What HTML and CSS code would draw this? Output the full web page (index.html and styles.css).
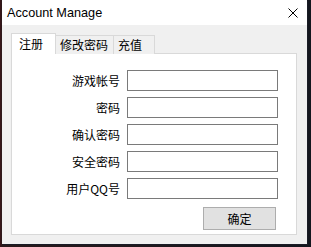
FILE: index.html
```html
<!DOCTYPE html>
<html lang="zh">
<head>
  <meta charset="UTF-8" />
  <title>Account Manage</title>
  <link rel="stylesheet" href="styles.css">
</head>
<body>
  <div class="window">
    <div class="titlebar">
      <span class="title">Account Manage</span>
      <svg class="close" width="10" height="10" viewBox="0 0 10 10">
        <path d="M0.5 0.5 L9.5 9.5 M9.5 0.5 L0.5 9.5" stroke="#000" stroke-width="1" fill="none" />
      </svg>
    </div>
    <div class="client">
      <!-- 标签 -->
      <div class="tabs">
        <div class="tab tab-reg active">注册</div>
        <div class="tab tab-pwd">修改密码</div>
        <div class="tab tab-pay">充值</div>
      </div>
      <!-- 注册页 -->
      <div class="panel">
        <div class="row"><label>游戏帐号</label><input class="field" type="text"></div>
        <div class="row"><label>密码</label><input class="field" type="password"></div>
        <div class="row"><label>确认密码</label><input class="field" type="password"></div>
        <div class="row"><label>安全密码</label><input class="field" type="password"></div>
        <div class="row"><label>用户QQ号</label><input class="field" type="text"></div>
        <div class="actions"><button class="btn">确定</button></div>
      </div>
    </div>
  </div>
</body>
</html>
```

FILE: styles.css
```css
* {
  margin: 0;
  padding: 0;
  box-sizing: border-box;
}
html, body {
  height: 100%;
  overflow: hidden;
}
body {
  background: linear-gradient(90deg, #3b1518 0, #2a1a1c 2px, #14161e 100%);
  font-family: "Noto Sans CJK SC", "Noto Sans", sans-serif;
  font-size: 12px;
  color: #000;
}
.window {
  margin-left: 2px;
  width: 305px;
  height: 244px;
  background: #f0f0f0;
  display: flex;
  flex-direction: column;
  box-shadow: 1px 1px 0 #1a1c26;
}
.titlebar {
  height: 25px;
  background: #fff;
  display: flex;
  align-items: center;
  justify-content: space-between;
  padding: 0 9px 0 5px;
}
.title {
  font-family: "Liberation Sans", sans-serif;
  font-size: 12.7px;
  color: #000;
}
.close {
  display: block;
  margin-top: 1px;
}
.client {
  flex: 1;
  padding: 8px 9px 8px 9px;
  display: flex;
  flex-direction: column;
}
.tabs {
  display: flex;
  align-items: flex-end;
  height: 21px;
  margin-bottom: -1px;
  position: relative;
  z-index: 1;
}
.tab {
  height: 19px;
  border: 1px solid #d9d9d9;
  border-bottom: none;
  background: #f0f0f0;
  line-height: 17px;
  padding-left: 4px;
  font-size: 12px;
}
.tab + .tab {
  border-left: none;
}
.tab-reg {
  width: 45px;
  padding-left: 7px;
}
.tab-pwd { width: 58px; }
.tab-pay { width: 41px; }
.tab.active {
  height: 21px;
  line-height: 20px;
  background: #fff;
  border-right: 1px solid #d9d9d9;
}
.panel {
  width: 286px;
  height: 182px;
  background: #fff;
  border: 1px solid #d9d9d9;
  padding-top: 16px;
  display: flex;
  flex-direction: column;
  gap: 6px;
}
.row {
  display: flex;
  align-items: center;
  height: 21px;
}
.row label {
  width: 108px;
  text-align: right;
  margin-right: 7px;
}
.field {
  width: 151px;
  height: 21px;
  border: 1px solid #7a7a7a;
  background: #fff;
  outline: none;
}
.actions {
  display: flex;
  justify-content: flex-end;
  padding-right: 20px;
  margin-top: 2px;
}
.btn {
  width: 73px;
  height: 23px;
  background: #e1e1e1;
  border: 1px solid #adadad;
  font-family: "Noto Sans CJK SC", sans-serif;
  font-size: 12px;
  color: #000;
}
```
